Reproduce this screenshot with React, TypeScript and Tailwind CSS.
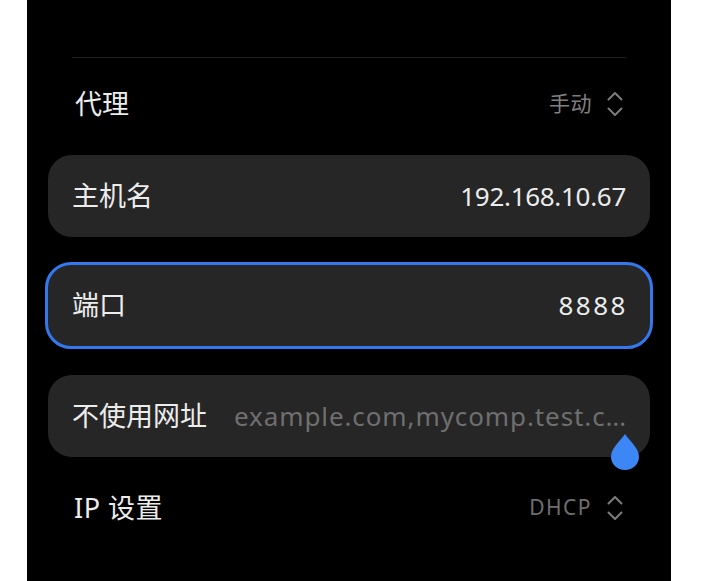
import React from "react";

const font = { fontFamily: '"Noto Sans", "Noto Sans CJK SC", sans-serif' };

function UpDown() {
  return (
    <svg width="16" height="26" viewBox="0 0 16 26" fill="none" className="ml-[15px]">
      <path d="M1.5 8.5 L8 2 L14.5 8.5" stroke="#7c7c7c" strokeWidth="2" strokeLinecap="round" strokeLinejoin="round" />
      <path d="M1.5 17.5 L8 24 L14.5 17.5" stroke="#7c7c7c" strokeWidth="2" strokeLinecap="round" strokeLinejoin="round" />
    </svg>
  );
}

function Drop() {
  return (
    <svg width="30" height="38" viewBox="0 0 30 38" className="absolute right-[10px] top-[58px]">
      <path d="M15 1 C18 6 29 15 29 23.5 C29 31.5 22.7 37 15 37 C7.3 37 1 31.5 1 23.5 C1 15 12 6 15 1 Z" fill="#3d86f5" />
    </svg>
  );
}

export default function App() {
  return (
    <div className="w-[727px] h-[581px] bg-white flex" style={font}>
      <div className="ml-[27px] w-[644px] h-[581px] bg-black flex flex-col">
        <div className="h-[57px]" />
        <div className="mx-[45px] h-px bg-[#1c1c1c]" />
        <div className="h-[92px] flex items-center justify-between pl-[48px] pr-[48px]">
          <span className="text-[27px] text-[#ececec]">代理</span>
          <div className="flex items-center">
            <span className="text-[21px] text-[#808080] tracking-[0.5px]">手动</span>
            <UpDown />
          </div>
        </div>
        <div className="mt-[5px] mx-[21px] h-[82px] rounded-[24px] bg-[#262626] flex items-center justify-between px-[24px]">
          <span className="text-[27px] text-[#ececec]">主机名</span>
          <span className="text-[26px] text-[#ececec] tracking-[-0.3px]">192.168.10.67</span>
        </div>
        <div className="mt-[25px] mx-[18px] h-[87px] rounded-[26px] bg-[#262626] border-[3px] border-[#3478f0] flex items-center justify-between px-[24px]">
          <span className="text-[27px] text-[#ececec]">端口</span>
          <span className="text-[26px] text-[#ececec] tracking-[2.5px] -mr-[2px]">8888</span>
        </div>
        <div className="relative mt-[26px] mx-[21px] h-[82px] rounded-[24px] bg-[#262626] flex items-center justify-between px-[24px]">
          <span className="text-[27px] text-[#ececec] whitespace-nowrap">不使用网址</span>
          <span className="text-[26px] text-[#6f6f6f] whitespace-nowrap tracking-[0.9px] -mr-[1px]">example.com,mycomp.test.c…</span>
          <Drop />
        </div>
        <div className="h-[102px] flex items-center justify-between pl-[47px] pr-[48px]">
          <span className="text-[27px] text-[#ececec] tracking-[0.5px]">IP 设置</span>
          <div className="flex items-center">
            <span className="text-[21px] text-[#6f6f6f] tracking-[1.5px]">DHCP</span>
            <UpDown />
          </div>
        </div>
      </div>
    </div>
  );
}
